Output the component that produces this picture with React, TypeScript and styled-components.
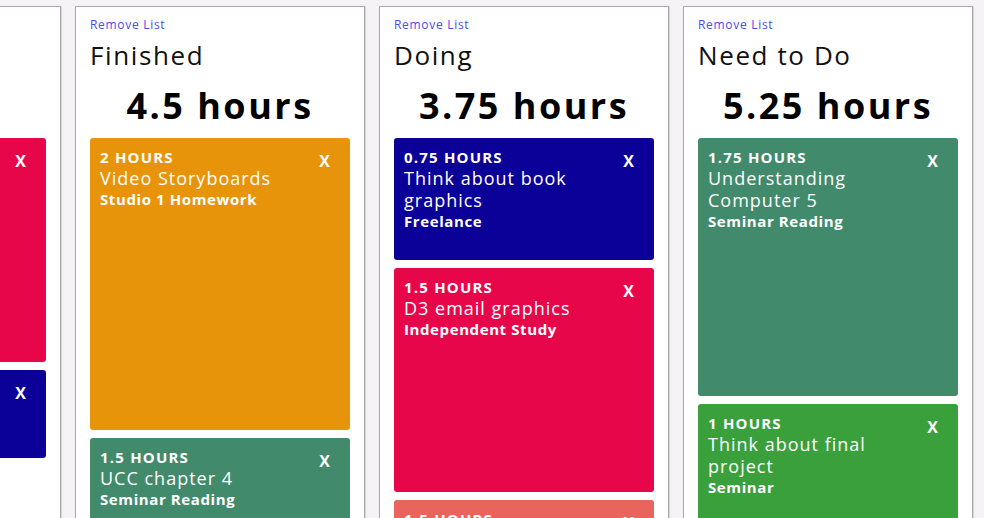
import React from "react";
import styled, { createGlobalStyle } from "styled-components";

const Global = createGlobalStyle`
  html, body {
    margin: 0;
    padding: 0;
    height: 100%;
    overflow: hidden;
    background: #f6f3f7;
    font-family: "Open Sans", "Liberation Sans", sans-serif;
  }
`;

type Task = { hours: number; title: string; category: string; color: string };
type List = { name: string; total: string; tasks: Task[] };

const C = {
  orange: "#e8940a",
  teal: "#418b6c",
  red: "#e8064b",
  blue: "#0b0098",
  salmon: "#e8645c",
  green: "#3aa03b",
};

const lists: List[] = [
  {
    name: "Backlog",
    total: "2 hours",
    tasks: [
      { hours: 1.5, title: "Reading response", category: "Seminar", color: C.red },
      { hours: 0.5, title: "Email advisor", category: "Thesis", color: C.blue },
    ],
  },
  {
    name: "Finished",
    total: "4.5 hours",
    tasks: [
      { hours: 2, title: "Video Storyboards", category: "Studio 1 Homework", color: C.orange },
      { hours: 1.5, title: "UCC chapter 4", category: "Seminar Reading", color: C.teal },
    ],
  },
  {
    name: "Doing",
    total: "3.75 hours",
    tasks: [
      { hours: 0.75, title: "Think about book graphics", category: "Freelance", color: C.blue },
      { hours: 1.5, title: "D3 email graphics", category: "Independent Study", color: C.red },
      { hours: 1.5, title: "Portfolio site", category: "Freelance", color: C.salmon },
    ],
  },
  {
    name: "Need to Do",
    total: "5.25 hours",
    tasks: [
      { hours: 1.75, title: "Understanding Computer 5", category: "Seminar Reading", color: C.teal },
      { hours: 1, title: "Think about final project", category: "Seminar", color: C.green },
    ],
  },
];

const Board = styled.div`
  display: flex;
  gap: 14px;
  padding-top: 6px;
  margin-left: -229px;
`;

const Column = styled.section`
  flex: 0 0 290px;
  box-sizing: border-box;
  min-height: 620px;
  background: #fff;
  border: 1px solid #a9a9a9;
  box-shadow: 1px 0 0 #d6d6d6;
  padding: 10px 14px 0 14px;
  display: flex;
  flex-direction: column;
`;

const RemoveLink = styled.a`
  font-size: 12px;
  line-height: 16px;
  color: #4b4be8;
  letter-spacing: 0.7px;
  text-decoration: none;
  cursor: pointer;
  align-self: flex-start;
`;

const ListTitle = styled.h2`
  margin: 5px 0 0 0;
  font-size: 26px;
  line-height: 34px;
  font-weight: 400;
  letter-spacing: 1.6px;
  color: #111;
`;

const Total = styled.div`
  margin-top: 12px;
  text-align: center;
  font-size: 36px;
  line-height: 44px;
  font-weight: 700;
  letter-spacing: 2.5px;
  color: #000;
`;

const Cards = styled.div`
  margin-top: 10px;
  display: flex;
  flex-direction: column;
  gap: 8px;
`;

const Card = styled.div<{ $bg: string; $hours: number }>`
  position: relative;
  box-sizing: border-box;
  height: ${(p) => Math.round(p.$hours * 136 + 20)}px;
  background: ${(p) => p.$bg};
  border-radius: 3px;
  padding: 9px 60px 0 10px;
  color: #fff;
  flex: 0 0 auto;
`;

const Hours = styled.div`
  font-size: 15px;
  line-height: 20px;
  font-weight: 700;
  letter-spacing: 1.2px;
  text-transform: uppercase;
`;

const TaskTitle = styled.div`
  font-size: 18px;
  line-height: 22px;
  letter-spacing: 1px;
`;

const Category = styled.div`
  font-size: 15px;
  line-height: 21px;
  font-weight: 700;
  letter-spacing: 0.6px;
`;

const Close = styled.button`
  position: absolute;
  top: 14px;
  right: 20px;
  padding: 0;
  border: 0;
  background: none;
  color: #fff;
  font-family: inherit;
  font-size: 16px;
  line-height: 18px;
  font-weight: 700;
  cursor: pointer;
`;

export default function App() {
  return (
    <>
      <Global />
      <Board>
        {lists.map((l) => (
          <Column key={l.name}>
            <RemoveLink>Remove List</RemoveLink>
            <ListTitle>{l.name}</ListTitle>
            <Total>{l.total}</Total>
            <Cards>
              {l.tasks.map((t, i) => (
                <Card key={i} $bg={t.color} $hours={t.hours}>
                  <Hours>{t.hours} hours</Hours>
                  <TaskTitle>{t.title}</TaskTitle>
                  <Category>{t.category}</Category>
                  <Close aria-label="remove task">X</Close>
                </Card>
              ))}
            </Cards>
          </Column>
        ))}
      </Board>
    </>
  );
}
